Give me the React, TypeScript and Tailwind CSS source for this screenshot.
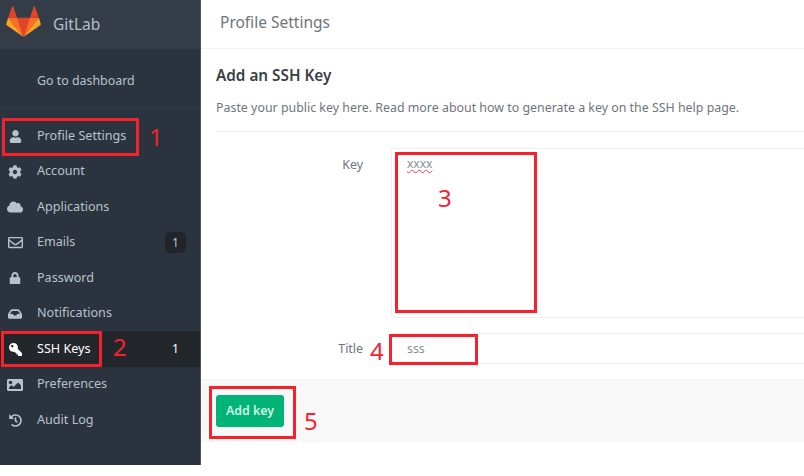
import type { ReactNode } from 'react';
import { FaUser, FaCog, FaCloud, FaRegEnvelope, FaLock, FaInbox, FaKey, FaImage, FaHistory } from 'react-icons/fa';

const navItems: { label: string; icon: ReactNode; badge?: string; active?: boolean }[] = [
  { label: 'Profile Settings', icon: <FaUser className="w-[13px] h-[13px]" /> },
  { label: 'Account', icon: <FaCog className="w-[14px] h-[14px]" /> },
  { label: 'Applications', icon: <FaCloud className="w-4 h-4" /> },
  { label: 'Emails', icon: <FaRegEnvelope className="w-[15px] h-[15px]" />, badge: '1' },
  { label: 'Password', icon: <FaLock className="w-3 h-3" /> },
  { label: 'Notifications', icon: <FaInbox className="w-[14px] h-[14px]" /> },
  { label: 'SSH Keys', icon: <FaKey className="w-[13px] h-[13px] -scale-x-100" />, badge: '1', active: true },
  { label: 'Preferences', icon: <FaImage className="w-4 h-4" /> },
  { label: 'Audit Log', icon: <FaHistory className="w-[13px] h-[13px]" /> },
];

function Logo() {
  return (
    <svg viewBox="0 0 36 33" className="w-[35px] h-[32px]">
      <path d="M18 32 L11.4 12 H24.6 Z" fill="#e24329" />
      <path d="M18 32 L11.4 12 H2.2 Z" fill="#fc6d26" />
      <path d="M2.2 12 L0.2 18.2 C0 18.8 0.2 19.4 0.7 19.8 L18 32 Z" fill="#fca326" />
      <path d="M2.2 12 H11.4 L7.4 0.6 C7.2 0 6.4 0 6.2 0.6 Z" fill="#e24329" />
      <path d="M18 32 L24.6 12 H33.8 Z" fill="#fc6d26" />
      <path d="M33.8 12 L35.8 18.2 C36 18.8 35.8 19.4 35.3 19.8 L18 32 Z" fill="#fca326" />
      <path d="M33.8 12 H24.6 L28.6 0.6 C28.8 0 29.6 0 29.8 0.6 Z" fill="#e24329" />
    </svg>
  );
}

function Sidebar() {
  return (
    <aside className="w-[201px] h-[465px] shrink-0 bg-[#2b333e] border-r border-[#4a535e] text-[#b8c2cc]">
      <div className="h-[49px] bg-[#333c47] flex items-center pl-[6px] gap-[12px]">
        <div className="mb-[5px]">
          <Logo />
        </div>
        <span className="text-[15.5px] text-[#b5bfc9]">GitLab</span>
      </div>
      <div className="h-[59px] border-b border-[#343c47] flex items-center pl-[37px] pt-[6px] text-[12.4px]">
        Go to dashboard
      </div>
      <nav className="pt-[10px]">
        {navItems.map((item) => (
          <div
            key={item.label}
            className={`h-[35.5px] flex items-center pr-[14px] pt-[1px] text-[12.6px] ${item.active ? 'bg-[#23262b] text-white' : ''}`}
          >
            <span className="w-[37px] flex justify-center pr-[7px]">{item.icon}</span>
            <span className="flex-1">{item.label}</span>
            {item.badge && (
              <span className={`w-[21px] h-[21px] rounded-[5px] flex items-center justify-center text-[12px] ${item.active ? '' : 'bg-[#20252b]'}`}>
                {item.badge}
              </span>
            )}
          </div>
        ))}
      </nav>
    </aside>
  );
}

function Content() {
  return (
    <main className="flex-1 min-w-0">
      <div className="h-[49px] border-b border-[#f2f2f2] flex items-center pl-[19px] pb-[3px] text-[15.5px] text-[#6f757b]">
        Profile Settings
      </div>
      <div className="px-[15px]">
        <h3 className="mt-[16px] text-[15.3px] leading-5 font-semibold text-[#3a3f45]">Add an SSH Key</h3>
        <p className="mt-[13px] text-[12.4px] leading-5 text-[#6f757b]">
          Paste your public key here. Read more about how to generate a key on the SSH help page.
        </p>
      </div>
      <div className="ml-[15px] mt-[13px] border-t border-[#f0f0f0]" />
      <div className="mt-[16px] flex">
        <label className="w-[162px] text-right pt-[8px] text-[12.4px] text-[#6f757b]">Key</label>
        <div className="ml-[28px] flex-1 h-[170px] border border-r-0 border-[#f0f0f0] rounded-l-[3px] pl-[15px] pt-[6px] text-[12px] text-[#8a8f94]">
          <span className="underline decoration-wavy decoration-[#e04040] decoration-1">xxxx</span>
        </div>
      </div>
      <div className="mt-[15px] flex items-center">
        <label className="w-[162px] text-right pt-[2px] text-[12.4px] text-[#6f757b]">Title</label>
        <div className="ml-[28px] flex-1 h-[31px] border border-r-0 border-[#f0f0f0] rounded-l-[3px] pl-[15px] pt-[2px] flex items-center text-[12.4px] text-[#8a8f94]">
          sss
        </div>
      </div>
      <div className="mt-[15px] h-[63px] bg-[#f8f8f8] border-t border-[#f2f2f2] pl-[15px] pt-[15px]">
        <button className="w-[68px] h-[32px] rounded-[3px] bg-[#00b478] text-[12.4px] font-semibold text-[#d4f3e6]">
          Add key
        </button>
      </div>
    </main>
  );
}

function Mark({ className }: { className: string }) {
  return <div className={`absolute border-[3px] border-[#f5222d] ${className}`} />;
}

function Num({ className, children }: { className: string; children: ReactNode }) {
  return <span className={`absolute text-[24px] leading-none text-[#f5222d] ${className}`}>{children}</span>;
}

export default function App() {
  return (
    <div className="relative w-[804px] h-[476px] overflow-hidden bg-white flex items-start font-['Noto_Sans',sans-serif]">
      <Sidebar />
      <Content />

      {/* red annotations on top of the screenshot */}
      <Mark className="left-[2px] top-[118px] w-[137px] h-[38px]" />
      <Mark className="left-[1px] top-[331px] w-[101px] h-[36px]" />
      <Mark className="left-[395px] top-[152px] w-[142px] h-[161px]" />
      <Mark className="left-[389px] top-[334px] w-[89px] h-[31px]" />
      <Mark className="left-[209px] top-[386px] w-[87px] h-[53px]" />
      <Num className="left-[149px] top-[125px]">1</Num>
      <Num className="left-[113px] top-[335px]">2</Num>
      <Num className="left-[438px] top-[186px]">3</Num>
      <Num className="left-[370px] top-[339px]">4</Num>
      <Num className="left-[304px] top-[409px]">5</Num>
    </div>
  );
}
